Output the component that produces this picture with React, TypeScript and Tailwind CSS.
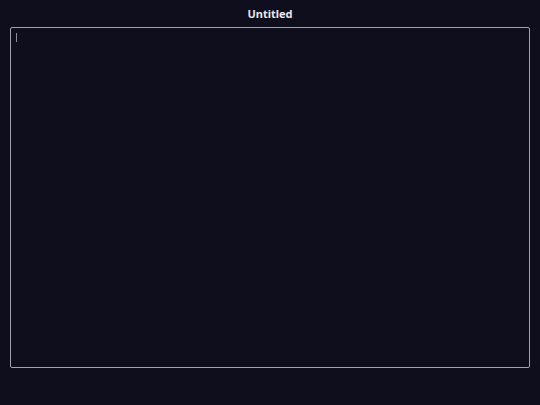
export default function App() {
  return (
    <div
      className="flex h-[405px] w-[540px] flex-col bg-[#0e0e1d] px-[10px]"
      style={{ fontFamily: '"Noto Sans", "DejaVu Sans", sans-serif' }}
    >
      <div className="flex h-[27px] items-center justify-center pt-px text-[11px] font-bold text-[#e8e8ec]">
        Untitled
      </div>
      <div className="relative h-[341px] w-[520px] rounded-[2px] border border-[#a3a3ad] bg-[#0e0e1d]">
        <span className="absolute left-[5px] top-[5px] h-[9px] w-px bg-[#8a8a96]" />
      </div>
    </div>
  );
}
